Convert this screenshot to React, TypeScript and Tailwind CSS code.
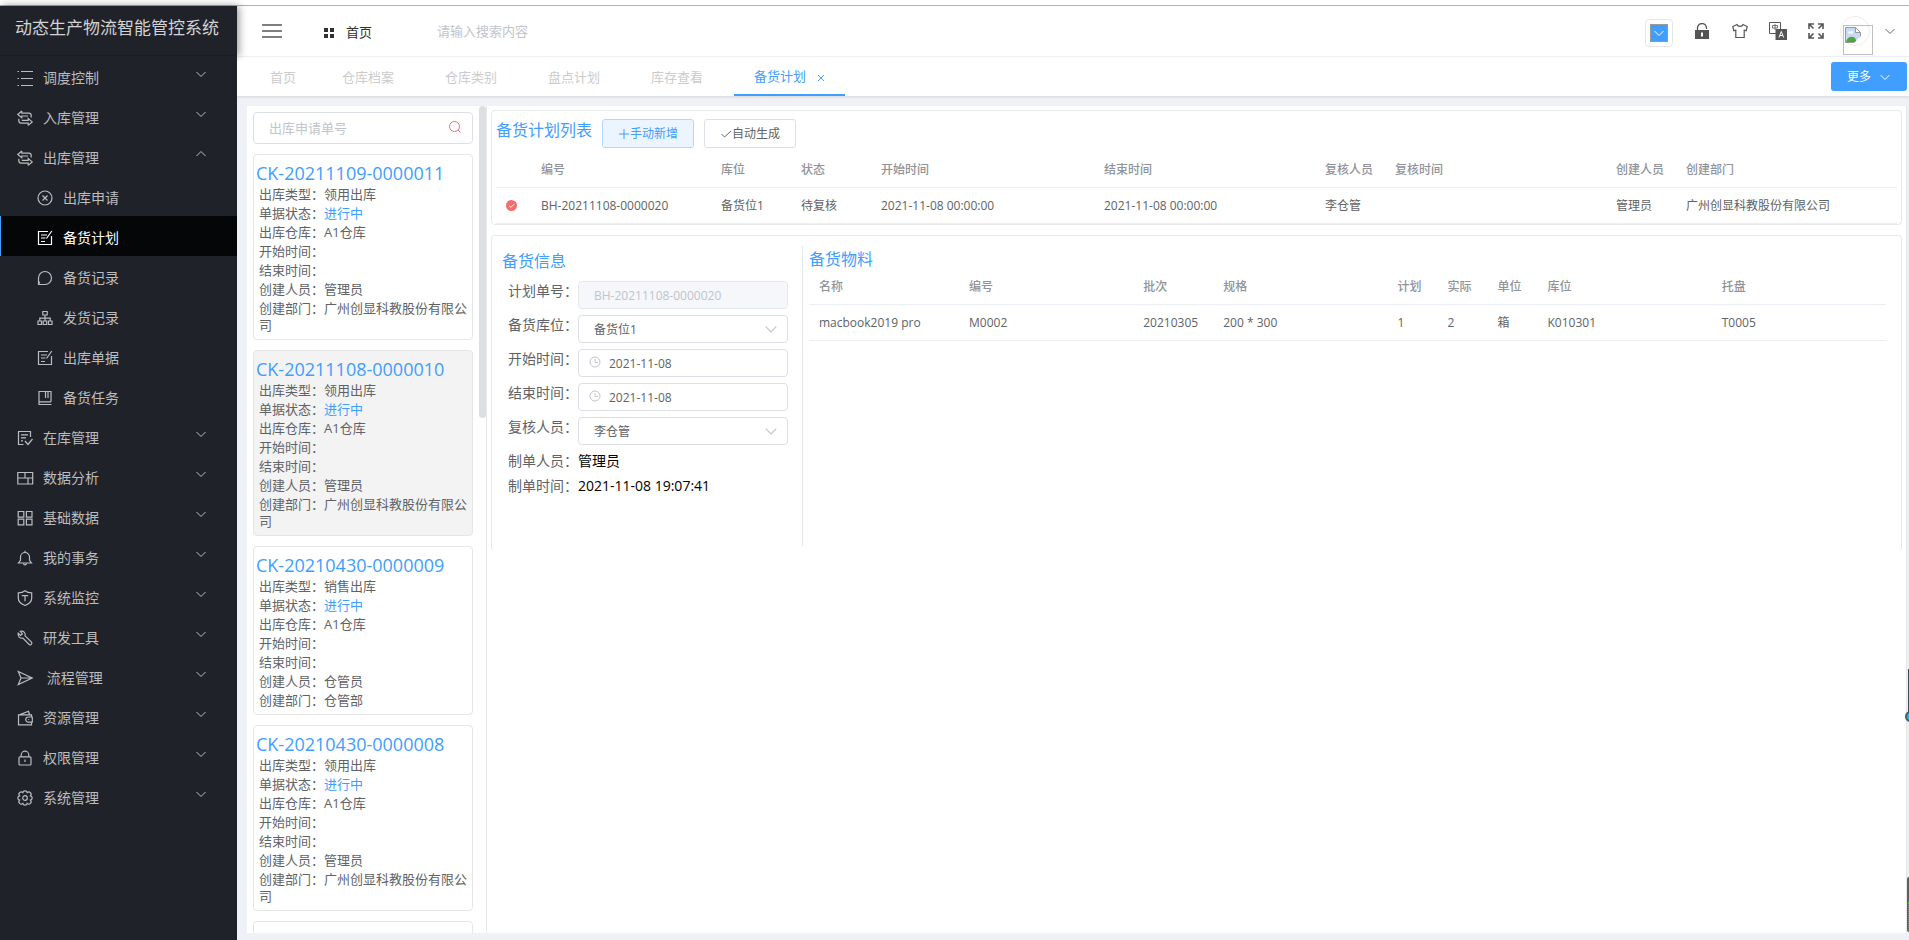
import type { ReactNode } from "react";
import clsx from "clsx";

type IconName = keyof typeof icons;

const icons = {
  list: (
    <>
      <path d="M4 1.5h12M4 8.5h12M4 15.5h12" />
      <path d="M0.5 1.5h1.5M0.5 8.5h1.5M0.5 15.5h1.5" />
    </>
  ),
  swap: (
    <>
      <path d="M4.8 1 .8 4.5l4 3.3V6h6.4M4.8 1v2.2h7q2.4 0 2.4 2.4v2" />
      <path d="m11.2 15.4 4-3.5-4-3.3v1.8H4.8M11.2 15.4v-2.2h-7q-2.4 0-2.4-2.4v-2" />
    </>
  ),
  closeCircle: (
    <>
      <circle cx="8" cy="8" r="7" />
      <path d="m5.5 5.5 5 5m0-5-5 5" />
    </>
  ),
  form: (
    <>
      <path d="M11 1.5H1.5v13h13V6" />
      <path d="M4 5h6M4 8h4.5M4 11.5h4M14.8 1 9.5 8.5" />
    </>
  ),
  message: <path d="M1.5 14.5V8A6.5 6.5 0 1 1 8 14.5H1.5Zm0 0 1.3-2.7" />,
  cluster: (
    <>
      <path d="M5.8 1.5h4.4v3.5H5.8zM1 11h3.5v3.5H1zM6.2 11h3.5v3.5H6.2zM11.5 11H15v3.5h-3.5z" />
      <path d="M8 5v6M2.8 11V8.2h10.4V11" />
    </>
  ),
  book: (
    <>
      <path d="M14 11.8V1.5H2v13h12.5M2 11.8h12" />
      <path d="M8.5 2v6M11 2v6" />
    </>
  ),
  fileDone: (
    <>
      <path d="M13.5 7V1.5h-12v13h5" />
      <path d="M4 4.8h7M4 7.8h5M4 10.8h2M8 11l3 3.5L15.5 9" />
    </>
  ),
  layout: (
    <>
      <path d="M.8 2.5h14.9v11.5H.8z" />
      <path d="M.8 8h14.9M8 2.5V8M11 8v6" />
    </>
  ),
  grid: <path d="M1.2 1.5h5.6v5.6H1.2zM9.4 1.5H15v5.6H9.4zM1.2 9.2h5.6v5.6H1.2zM9.4 9.2H15v5.6H9.4z" />,
  bell: (
    <>
      <path d="M1.5 13h13l-2-2.6V7a4.5 4.5 0 0 0-9 0v3.4z" />
      <path d="M8 .8V2.5M6.5 13.2c.2 2.2 2.8 2.2 3 0" />
    </>
  ),
  shield: (
    <>
      <path d="M8 .8C6 2.4 3.8 2.9 1.3 2.9v5.4c0 3.4 3 5.8 6.7 7.2 3.7-1.4 6.7-3.8 6.7-7.2V2.9C12.2 2.9 10 2.4 8 .8Z" />
      <path d="M4.8 5.6h6.4M8 5.6v5.6" />
    </>
  ),
  tool: (
    <path d="M1.2 3.2 3.6 5.4 5.4 3.9 3.3 1.4C6.5.4 8.8 2.8 8.1 5.8l6.4 6.4c1.2 1.6-.8 3.6-2.3 2.3L5.9 8.1C3 8.8.4 6.4 1.2 3.2Z" />
  ),
  send: <path d="M1.3 1.5 15.2 8 1.3 14.6 4 8zM4 8h11" />,
  wallet: (
    <>
      <path d="M14.5 7V4.8H1.5v10h13v-2.6M3 4.6 11.5 1.3l1 3.2" />
      <path d="M15.3 7h-4a2.5 2.5 0 0 0 0 5.1h4zM11.3 9.5h.8" />
    </>
  ),
  lock: (
    <>
      <rect x="2" y="6.8" width="12" height="8.2" rx="1" />
      <path d="M4.2 6.8V5a3.8 3.8 0 0 1 7.6 0v1.8M8 9.5v2.6" />
    </>
  ),
  gear: (
    <>
      <circle cx="8" cy="8" r="2.3" />
      <path d="M13.4 5.8a2.25 2.25 0 0 1 0 4.4a2.25 2.25 0 0 1-3.2 3.2a2.25 2.25 0 0 1-4.4 0a2.25 2.25 0 0 1-3.2-3.2a2.25 2.25 0 0 1 0-4.4a2.25 2.25 0 0 1 3.2-3.2a2.25 2.25 0 0 1 4.4 0a2.25 2.25 0 0 1 3.2 3.2z" />
    </>
  ),
};

function Icon({ name }: { name: IconName }) {
  return (
    <svg viewBox="0 0 16 16" className="size-4 shrink-0 overflow-visible" fill="none" stroke="currentColor" strokeWidth="1.2">
      {icons[name]}
    </svg>
  );
}

function Chevron({ up = false, className = "size-3" }: { up?: boolean; className?: string }) {
  return (
    <svg viewBox="0 0 12 12" className={clsx("shrink-0", className)} fill="none" stroke="currentColor">
      <path d={up ? "M1.5 8 6 3.5 10.5 8" : "M1.5 4 6 8.5 10.5 4"} />
    </svg>
  );
}

type MenuItem = { label: string; icon: IconName; children?: MenuItem[] };

const menu: MenuItem[] = [
  { label: "调度控制", icon: "list" },
  { label: "入库管理", icon: "swap" },
  {
    label: "出库管理",
    icon: "swap",
    children: [
      { label: "出库申请", icon: "closeCircle" },
      { label: "备货计划", icon: "form" },
      { label: "备货记录", icon: "message" },
      { label: "发货记录", icon: "cluster" },
      { label: "出库单据", icon: "form" },
      { label: "备货任务", icon: "book" },
    ],
  },
  { label: "在库管理", icon: "fileDone" },
  { label: "数据分析", icon: "layout" },
  { label: "基础数据", icon: "grid" },
  { label: "我的事务", icon: "bell" },
  { label: "系统监控", icon: "shield" },
  { label: "研发工具", icon: "tool" },
  { label: "\u00a0流程管理", icon: "send" },
  { label: "资源管理", icon: "wallet" },
  { label: "权限管理", icon: "lock" },
  { label: "系统管理", icon: "gear" },
];

const tabs = ["首页", "仓库档案", "仓库类别", "盘点计划", "库存查看"];

const orders = [
  { no: "CK-20211109-0000011", type: "领用出库", user: "管理员", dept: "广州创显科教股份有限公司" },
  { no: "CK-20211108-0000010", type: "领用出库", user: "管理员", dept: "广州创显科教股份有限公司", active: true },
  { no: "CK-20210430-0000009", type: "销售出库", user: "仓管员", dept: "仓管部" },
  { no: "CK-20210430-0000008", type: "领用出库", user: "管理员", dept: "广州创显科教股份有限公司" },
];

function Sidebar() {
  return (
    <aside className="z-10 w-[237px] shrink-0 bg-[#20222a] text-sm text-[#bcbdbf]">
      <div className="h-[50px] border-b border-[#1b1c23] pl-[15px] text-[17px] leading-[44px] whitespace-nowrap text-[#d2d3d4] shadow-[2px_0_8px_rgba(0,0,0,0.4)]">
        动态生产物流智能管控系统
      </div>
      <nav className="relative bg-[#20222a]">
        {menu.map((item) => (
          <div key={item.label}>
            <button className="flex h-10 w-full items-center gap-2.5 pt-1 pr-[30px] pl-[17px] text-left">
              <Icon name={item.icon} />
              <span className="flex-1">{item.label}</span>
              <Chevron up={!!item.children} className="mt-2 size-3 self-start" />
            </button>
            {item.children?.map((sub) => (
              <a
                key={sub.label}
                href="#"
                className={clsx(
                  "flex h-10 items-center gap-2.5 border-l pt-1 pl-9",
                  sub.label === "备货计划" ? "border-[#409eff] bg-[#050608] text-white" : "border-transparent"
                )}
              >
                <Icon name={sub.icon} />
                {sub.label}
              </a>
            ))}
          </div>
        ))}
      </nav>
    </aside>
  );
}

function Header() {
  return (
    <header className="flex h-[51px] items-center border-b border-[#f4f4f4] bg-white pr-[13px] pl-[25px] text-[13px] text-[#303133]">
      <button aria-label="折叠菜单">
        <svg viewBox="0 0 20 14" className="h-3.5 w-5" stroke="#555" strokeWidth="1.3">
          <path d="M0 1h20M0 7h20M0 13h20" />
        </svg>
      </button>
      <a href="#" className="ml-[42px] flex items-center gap-3 pt-1">
        <svg viewBox="0 0 10 10" className="size-2.5" fill="#303133">
          <path d="M0 0h4v4H0zM6 0h4v4H6zM0 6h4v4H0zM6 6h4v4H6z" />
        </svg>
        首页
      </a>
      <input
        aria-label="搜索"
        placeholder="请输入搜索内容"
        className="ml-[65px] w-60 pt-0.5 outline-none placeholder:text-[#c0c4cc]"
      />
      <div className="ml-auto flex items-center">
        <button aria-label="主题色" className="mt-1 flex size-7 items-center justify-center rounded border border-[#e6e6e6]">
          <span className="flex size-[18px] items-center justify-center border border-[#999] bg-[#409eff] text-white">
            <Chevron />
          </span>
        </button>
        <button aria-label="锁屏" className="ml-[22px]">
          <svg viewBox="0 0 14 16" className="h-4 w-3.5" fill="#555">
            <path d="M0 7h14v9H0z" />
            <path d="M2.5 7V5a4.5 4.5 0 0 1 9 0v1" fill="none" stroke="#555" strokeWidth="1.3" />
            <path d="M6 9.5h2v4H6z" fill="#fff" />
          </svg>
        </button>
        <button aria-label="主题" className="ml-[23px]">
          <svg viewBox="0 0 16 16" className="size-4" fill="none" stroke="#555" strokeWidth="1.2">
            <path d="M5 1.5.8 3.5l1 4.2 2-.5v7.3h8.4V7.2l2 .5 1-4.2L11 1.5C10.2 4 5.8 4 5 1.5Z" />
          </svg>
        </button>
        <button aria-label="语言" className="ml-[21px]">
          <svg viewBox="0 0 18 18" className="size-[18px]" fill="none" stroke="#555">
            <path d="M.5.5h11v11H.5z" />
            <path d="M3.5 3.5h5v2.5h-5zM6 2v6" strokeWidth=".8" />
            <path d="M6.5 7H18v11H6.5z" fill="#555" stroke="none" />
            <path d="m10 15.5 2.3-6 2.3 6M10.9 13.5h2.8" stroke="#fff" />
          </svg>
        </button>
        <button aria-label="全屏" className="ml-[21px]">
          <svg viewBox="0 0 16 16" className="size-4" fill="none" stroke="#555" strokeWidth="1.6">
            <path d="M1 6V1h5M10 1h5v5M15 10v5h-5M6 15H1v-5M1 1l4.5 4.5M15 1l-4.5 4.5M15 15l-4.5-4.5M1 15l4.5-4.5" />
          </svg>
        </button>
        <div className="relative ml-4 size-[30px] rounded-full border border-[#eee]">
          <div className="absolute top-2 left-0.5 size-[30px] border border-[#c0c0c0] p-px">
            <svg viewBox="0 0 16 16" className="size-4">
              <path d="M.5.5h10l5 5v10H.5z" fill="#c6d9f7" stroke="#999" />
              <path d="M3 6.5c-1-2 1.5-3 2.2-1.8C6.5 3.2 9 4.5 8 6.5z" fill="#fff" />
              <path d="M1 15c1-5 6-6.500 9-4l2 4z" fill="#4ea53c" />
              <path d="M10.5.5v5h5z" fill="#fff" stroke="#999" />
              <path d="m9 16 7-7v7z" fill="#fff" />
            </svg>
          </div>
        </div>
        <button aria-label="用户菜单" className="ml-3.5 text-[#666]">
          <Chevron />
        </button>
      </div>
    </header>
  );
}

function TabBar() {
  return (
    <div className="relative flex h-[39px] items-start bg-white pl-[13px] text-[13px] leading-[40px] text-[#ccc] shadow-[0_1px_3px_rgba(0,0,0,0.12)]">
      {tabs.map((tab, i) => (
        <button key={tab} className={clsx("pl-5", i === 0 ? "pr-[26px]" : "pr-[31px]")}>
          {tab}
        </button>
      ))}
      <button className="flex h-[39px] items-center gap-[11px] border-b-2 border-[#409eff] px-5 text-[#409eff]">
        备货计划
        <svg viewBox="0 0 8 8" className="mt-1 size-2" stroke="currentColor">
          <path d="m1 1 6 6m0-6-6 6" />
        </svg>
      </button>
      <button className="mt-[5px] mr-0.5 ml-auto flex h-[29px] items-center gap-2 rounded-[3px] bg-[#409eff] px-4 text-xs text-white">
        更多
        <Chevron />
      </button>
    </div>
  );
}

function OrderList() {
  return (
    <section className="relative flex w-60 shrink-0 flex-col gap-2.5 overflow-hidden border-r border-[#e6e8eb] pt-1.5 pr-[13px] pl-1.5 text-[13px] text-[#606266]">
      <div className="relative shrink-0">
        <input
          aria-label="出库申请单号"
          placeholder="出库申请单号"
          className="h-8 w-full rounded border border-[#dcdfe6] px-[15px] outline-none placeholder:text-[#c0c4cc]"
        />
        <svg viewBox="0 0 12 12" className="absolute top-[9px] right-3 size-3" fill="none" stroke="#f56c6c">
          <circle cx="5.5" cy="5.5" r="5" />
          <path d="m9 9 2.5 2.5" />
        </svg>
      </div>
      {orders.map((o) => (
        <article
          key={o.no}
          className={clsx("shrink-0 rounded border border-[#e6e6e6] pt-1.5 pb-[5px] pl-[5px] leading-[17px]", o.active && "bg-[#f3f3f3]")}
        >
          <h3 className="mb-px -ml-[3px] text-lg leading-6 text-[#409eff]">{o.no}</h3>
          <p className="mb-0.5">出库类型：{o.type}</p>
          <p className="mb-0.5">
            单据状态：<span className="text-[#409eff]">进行中</span>
          </p>
          <p className="mb-0.5">出库仓库：A1仓库</p>
          <p className="mb-0.5">开始时间：</p>
          <p className="mb-0.5">结束时间：</p>
          <p className="mb-0.5">创建人员：{o.user}</p>
          <p>创建部门：{o.dept}</p>
        </article>
      ))}
      <article className="h-[186px] shrink-0 rounded border border-[#e6e6e6]" />
      <div className="absolute top-0 right-0 h-[312px] w-[7px] rounded-full bg-[#dddee0]" />
    </section>
  );
}

type Column = { title: string; width: string; value: ReactNode };

const planColumns: Column[] = [
  {
    title: "",
    width: "w-[35px]",
    value: (
      <svg viewBox="0 0 11 11" className="size-[11px]">
        <circle cx="5.5" cy="5.5" r="5.5" fill="#f56c6c" />
        <path d="m3 5.6 1.9 1.8L8.2 4" fill="none" stroke="#fff" />
      </svg>
    ),
  },
  { title: "编号", width: "w-[180px]", value: "BH-20211108-0000020" },
  { title: "库位", width: "w-20", value: "备货位1" },
  { title: "状态", width: "w-20", value: "待复核" },
  { title: "开始时间", width: "w-[223px]", value: "2021-11-08 00:00:00" },
  { title: "结束时间", width: "w-auto", value: "2021-11-08 00:00:00" },
  { title: "复核人员", width: "w-[70px]", value: "李仓管" },
  { title: "复核时间", width: "w-auto", value: "" },
  { title: "创建人员", width: "w-[70px]", value: "管理员" },
  { title: "创建部门", width: "w-auto", value: "广州创显科教股份有限公司" },
];

const materialColumns: Column[] = [
  { title: "名称", width: "w-[150px]", value: "macbook2019 pro" },
  { title: "编号", width: "w-auto", value: "M0002" },
  { title: "批次", width: "w-20", value: "20210305" },
  { title: "规格", width: "w-auto", value: "200 * 300" },
  { title: "计划", width: "w-[50px]", value: "1" },
  { title: "实际", width: "w-[50px]", value: "2" },
  { title: "单位", width: "w-[50px]", value: "箱" },
  { title: "库位", width: "w-auto", value: "K010301" },
  { title: "托盘", width: "w-auto", value: "T0005" },
];

function DataTable({ columns }: { columns: Column[] }) {
  return (
    <table className="w-full table-fixed border-separate border-spacing-0 text-left text-xs whitespace-nowrap text-[#606266]">
      <thead>
        <tr className="h-[35px] text-[#909399]">
          {columns.map((c) => (
            <th key={c.title} className={clsx("border-b border-[#ebeef5] pl-2.5 font-medium", c.width)}>
              {c.title}
            </th>
          ))}
        </tr>
      </thead>
      <tbody>
        <tr className="h-9">
          {columns.map((c) => (
            <td key={c.title} className="border-b border-[#ebeef5] pl-2.5">
              {c.value}
            </td>
          ))}
        </tr>
      </tbody>
    </table>
  );
}

function Field({ id, label, children }: { id: string; label: string; children: ReactNode }) {
  return (
    <div className="flex items-start">
      <label htmlFor={id} className="w-[70px] shrink-0 text-sm text-[#606266]">
        {label}：
      </label>
      <div className="relative flex-1 text-xs text-[#606266]">{children}</div>
    </div>
  );
}

function SelectField({ id, label, value }: { id: string; label: string; value: string }) {
  return (
    <Field id={id} label={label}>
      <select id={id} className="block h-7 w-full appearance-none rounded border border-[#dcdfe6] bg-white px-[15px] pt-px">
        <option>{value}</option>
      </select>
      <Chevron className="pointer-events-none absolute top-[7px] right-2.5 size-3.5 text-[#c0c4cc]" />
    </Field>
  );
}

function DateField({ id, label, value }: { id: string; label: string; value: string }) {
  return (
    <Field id={id} label={label}>
      <input id={id} defaultValue={value} className="block h-7 w-full rounded border border-[#dcdfe6] pl-[30px]" />
      <svg viewBox="0 0 12 12" className="absolute top-[7px] left-[11px] size-3" fill="none" stroke="#c0c4cc">
        <circle cx="6" cy="6" r="5" />
        <path d="M6 3v3.5h3" />
      </svg>
    </Field>
  );
}

export default function App() {
  return (
    <div className="relative flex h-screen flex-col overflow-hidden bg-white font-['Open_Sans','Noto_Sans_CJK_SC',sans-serif]">
      <div className="h-1.5 shrink-0 border-b border-[#b0b0b0]" />
      <div className="flex min-h-0 flex-1">
        <Sidebar />
        <div className="flex min-w-0 flex-1 flex-col bg-[#eff1f6]">
          <Header />
          <TabBar />
          <main className="mt-2.5 mr-0.5 mb-[7px] ml-2.5 flex min-h-0 flex-1 border-r border-[#e6e6e6] bg-white">
            <OrderList />
            <div className="min-w-0 flex-1 p-1">
              <section className="rounded border border-[#e6e8eb] px-1 pt-2">
                <div className="mb-[5px] flex items-start gap-2.5 text-xs">
                  <h2 className="text-base leading-[22px] text-[#409eff]">备货计划列表</h2>
                  <button className="flex h-[29px] w-[92px] items-center justify-center rounded-[3px] border border-[#b3d8ff] bg-[#ecf5ff] text-[#409eff]">
                    <svg viewBox="0 0 12 12" className="size-3" stroke="currentColor">
                      <path d="M1 6h10M6 1v10" />
                    </svg>
                    手动新增
                  </button>
                  <button className="flex h-[29px] w-[92px] items-center justify-center rounded-[3px] border border-[#dcdfe6] text-[#606266]">
                    <svg viewBox="0 0 12 12" className="size-3" fill="none" stroke="currentColor">
                      <path d="m1.5 6 3 3L11 3" />
                    </svg>
                    自动生成
                  </button>
                </div>
                <DataTable columns={planColumns} />
              </section>

              <section className="mt-2.5 flex rounded border border-b-0 border-[#e6e8eb] pt-2.5 pr-[15px] pb-[5px] pl-2.5">
                <div className="min-h-[300px] w-[301px] shrink-0 border-r border-[#e4e7ed] pt-1 pr-3.5">
                  <h2 className="mb-[9px] text-base leading-[22px] text-[#409eff]">备货信息</h2>
                  <form className="flex flex-col gap-1.5 pl-1.5">
                    <Field id="planNo" label="计划单号">
                      <input
                        id="planNo"
                        disabled
                        defaultValue="BH-20211108-0000020"
                        className="block h-7 w-full rounded border border-[#e4e7ed] bg-[#f5f7fa] px-[15px] text-[#c0c4cc]"
                      />
                    </Field>
                    <SelectField id="location" label="备货库位" value="备货位1" />
                    <DateField id="startDate" label="开始时间" value="2021-11-08" />
                    <DateField id="endDate" label="结束时间" value="2021-11-08" />
                    <SelectField id="reviewer" label="复核人员" value="李仓管" />
                    <div className="flex text-sm leading-[19px] text-black">
                      <span className="w-[70px] text-[#606266]">制单人员：</span>管理员
                    </div>
                    <div className="flex text-sm leading-[19px] text-black">
                      <span className="w-[70px] text-[#606266]">制单时间：</span>2021-11-08 19:07:41
                    </div>
                  </form>
                </div>
                <div className="min-w-0 flex-1 pt-0.5 pl-1.5">
                  <h2 className="text-base leading-[22px] text-[#409eff]">备货物料</h2>
                  <DataTable columns={materialColumns} />
                </div>
              </section>
            </div>
          </main>
        </div>
      </div>

      {/* docked widgets peeking in from the right edge */}
      <div className="absolute right-0 bottom-[228px] h-[43px] w-px bg-[#3d4f5c]" />
      <div className="absolute -right-[7px] bottom-[218px] size-[11px] rounded-full border-2 border-[#4f5b66] bg-[#29b6e8]" />
      <div className="absolute right-0 bottom-2 flex h-[55px] w-0.5 items-end justify-end rounded-l-sm bg-[#5f5f5f]">
        <div className="h-[30px] border-r border-dotted border-[#1fd34f]" />
      </div>
    </div>
  );
}
